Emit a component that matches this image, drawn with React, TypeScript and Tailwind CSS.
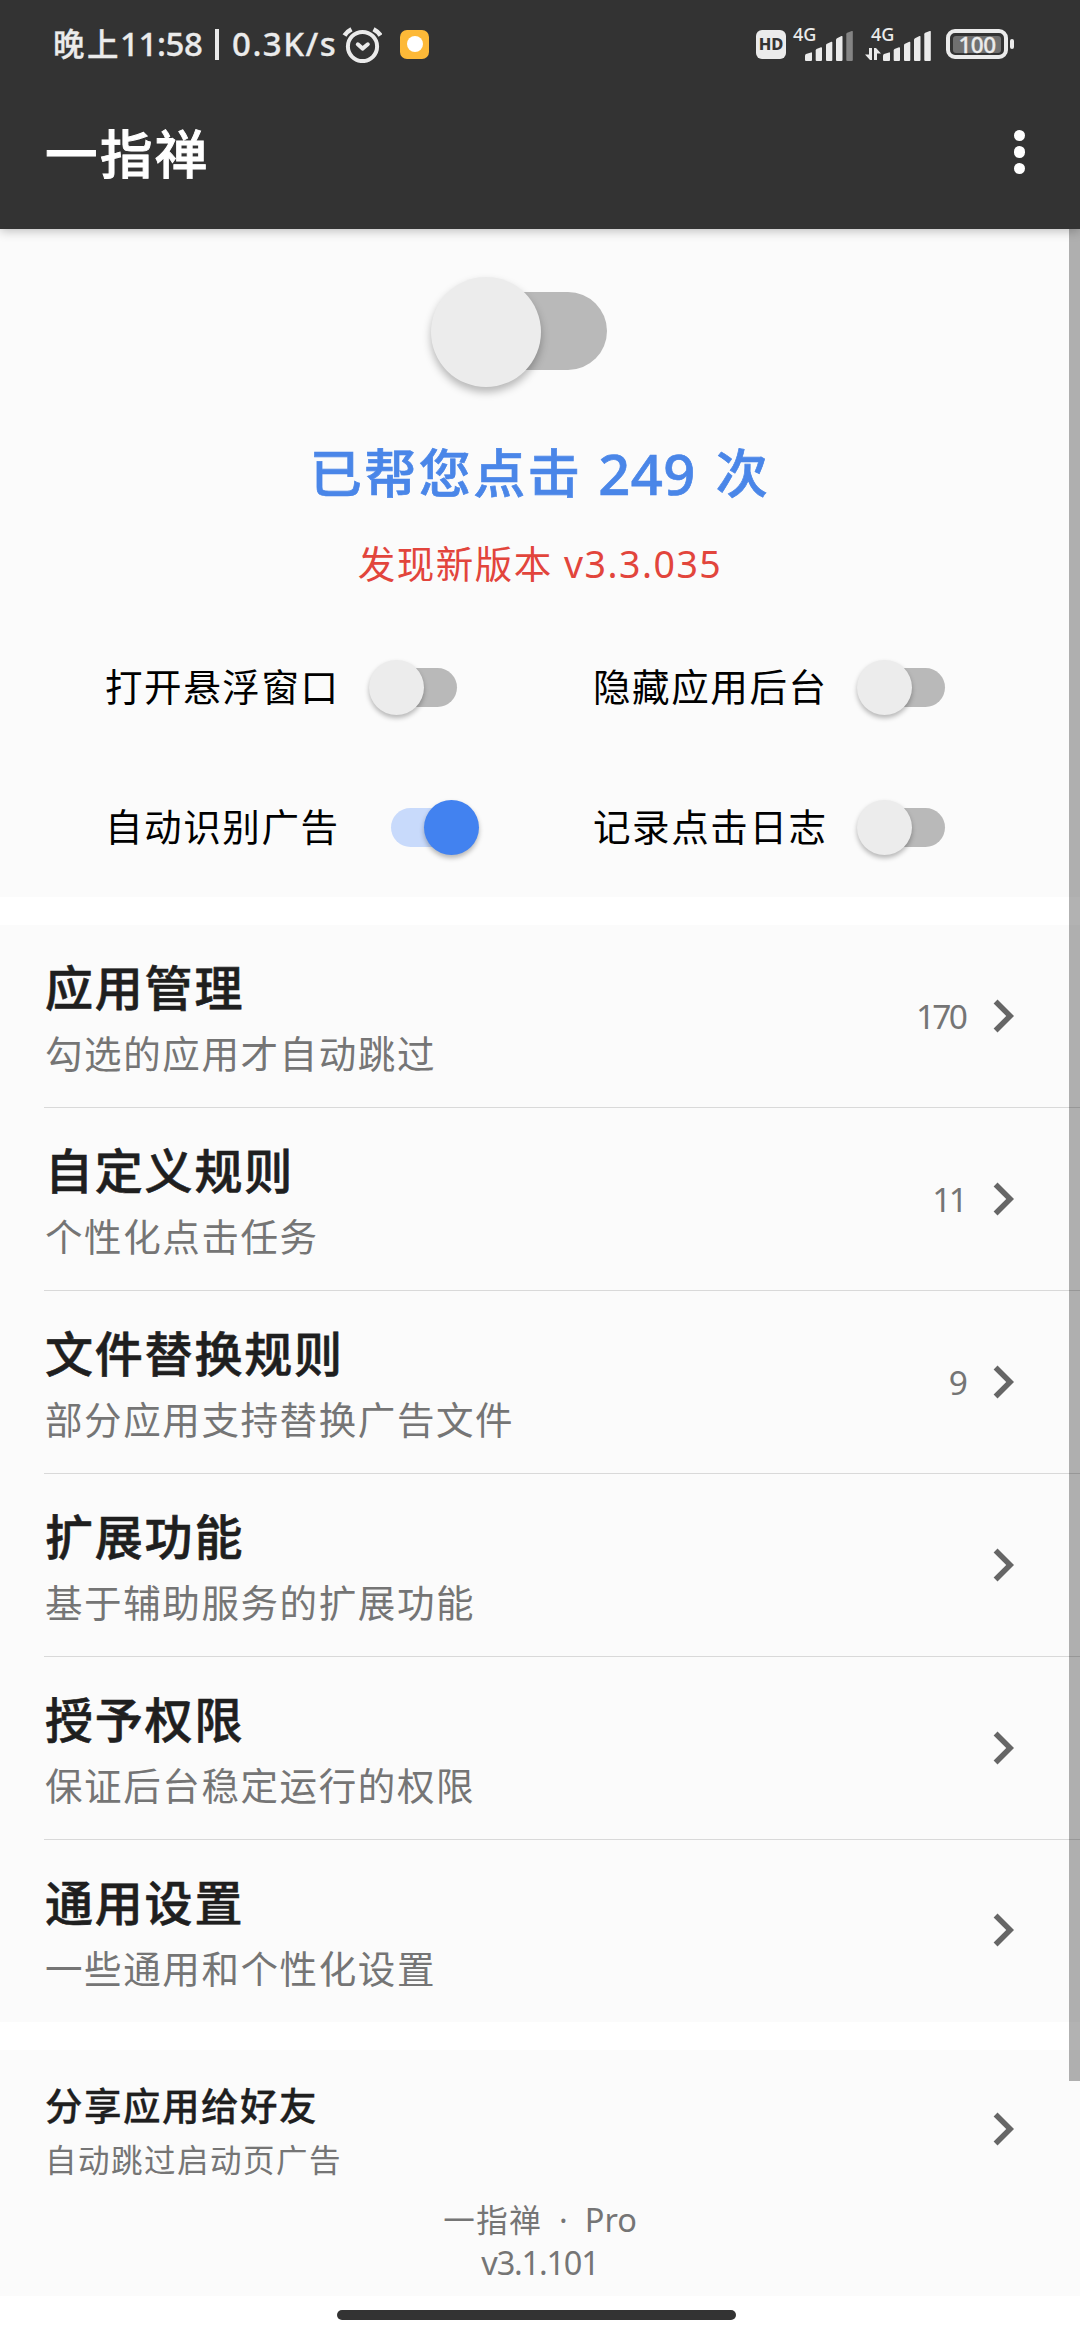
import type { ReactNode } from "react";

const FONT = "font-['Noto_Sans','Noto_Sans_CJK_SC',sans-serif]";

function Switch({ on = false }: { on?: boolean }) {
  return (
    <div className="relative h-[55px] w-[110px] shrink-0">
      <div
        className={`absolute top-[8px] left-[22px] h-[39px] w-[66px] rounded-full ${on ? "bg-[#c8dafb]" : "bg-[#b9b9b9]"}`}
      />
      <div
        className={`absolute top-0 h-[55px] w-[55px] rounded-full shadow-[0_3px_5px_rgba(0,0,0,0.28)] ${on ? "left-[55px] bg-[#4282f0]" : "left-0 bg-[#ececec]"}`}
      />
    </div>
  );
}

function Chevron() {
  return (
    <svg viewBox="0 0 24 24" className="h-[66px] w-[66px] shrink-0" fill="#666666">
      <path d="M10 6L8.59 7.41 13.17 12l-4.58 4.59L10 18l6-6z" />
    </svg>
  );
}

function Option({ label, on }: { label: string; on?: boolean }) {
  return (
    <div className="flex h-[140px] items-center">
      <span className="w-[264px] text-[37.5px] leading-[56px] tracking-[1.6px] whitespace-nowrap text-black">
        {label}
      </span>
      <Switch on={on} />
    </div>
  );
}

function Row({ title, note, count, last }: { title: string; note: string; count?: string; last?: boolean }) {
  return (
    <div className={`relative flex items-center pr-[44px] pb-[2px] pl-[45px] ${last ? "h-[182px]" : "h-[183px]"}`}>
      <div className="flex-1 self-start pt-[30px]">
        <div className="text-[48px] leading-[66px] font-medium tracking-[1.8px] text-[#1f1f1f] [-webkit-text-stroke:0.6px_#1f1f1f]">
          {title}
        </div>
        <div className="text-[37.5px] leading-[66px] tracking-[1.6px] text-[#757575]">{note}</div>
      </div>
      {count && (
        <span className="mr-[5px] text-[33.5px] leading-[50px] tracking-[-2.8px] text-[#757575]">{count}</span>
      )}
      <Chevron />
      {!last && <div className="absolute right-0 bottom-0 left-[44px] h-px bg-[#d9d9d9]" />}
    </div>
  );
}

function Bars({ weak }: { weak?: boolean }) {
  return (
    <svg viewBox="0 0 48 30" className="h-[30px] w-[48px]" fill="#ebebeb">
      <path d="M0 24.5Q0 23.6 1 23L6 21.4Q7 21.2 7 22V29Q7 30 6 30H1Q0 30 0 29Z" />
      <path d="M10.7 19.5Q10.7 18.6 11.5 18L16 16.2Q17 16 17 17V29Q17 30 16 30H11.7Q10.7 30 10.7 29Z" />
      <path d="M21 14.2Q21 13.3 22 12.8L26.3 10.8Q27.3 10.5 27.3 11.5V29Q27.3 30 26.3 30H22Q21 30 21 29Z" />
      <path d="M31 8.7Q31 7.8 32 7.2L36.5 5.1Q37.5 4.8 37.5 5.8V29Q37.5 30 36.5 30H32Q31 30 31 29Z" />
      <path
        fill={weak ? "#848484" : "#ebebeb"}
        d="M41.3 3.2Q41.3 2.2 42.2 1.8L46.8 0Q47.8 -.2 47.8 .8V29Q47.8 30 46.8 30H42.3Q41.3 30 41.3 29Z"
      />
    </svg>
  );
}

function Signal({ weak, className = "", children }: { weak?: boolean; className?: string; children?: ReactNode }) {
  return (
    <div className={`relative h-[34px] w-[60px] ${className}`}>
      <span className="absolute -top-[4px] left-0 text-[18px] leading-[22px] font-medium">4G</span>
      <div className="absolute top-[4px] left-[12px]">
        <Bars weak={weak} />
      </div>
      {children}
    </div>
  );
}

function StatusBar() {
  return (
    <div className="flex h-[88px] items-center pl-[53px] text-[33px] leading-[44px] font-medium whitespace-pre text-[#ebebeb]">
      <span className="w-[67px] text-[31.5px] tracking-[2.4px] [-webkit-text-stroke:0.3px_#ebebeb]">晚上</span>
      <span className="w-[95px] tracking-[-0.4px] [-webkit-text-stroke:0.3px_#ebebeb]">11:58</span>
      <span className="h-[31px] w-[4px] bg-[#ebebeb]" />
      <span className="ml-[13px] w-[110px] tracking-[1.5px] [-webkit-text-stroke:0.3px_#ebebeb]">0.3K/s</span>
      <svg viewBox="0 0 40 37" className="h-[37px] w-[40px]" fill="none" stroke="#ebebeb" strokeLinecap="round">
        <circle cx="20.5" cy="20.5" r="14.6" strokeWidth="4" />
        <path d="M2.5 9.5Q5 5.500 9.500 3.200M38.500 9.500Q36 5.500 31.500 3.200" strokeWidth="4.6" strokeLinecap="butt" />
        <path d="M15.800 18.300L20.500 22.600L25.800 18.300" strokeWidth="4" strokeLinejoin="round" />
      </svg>
      <div className="ml-[18px] flex h-[29px] w-[29px] items-center justify-center rounded-[7px] bg-[#fdb938]">
        <div className="h-[16px] w-[16px] rounded-full bg-white" />
      </div>
      <div className="ml-auto flex h-[29px] w-[30px] items-center justify-center rounded-[6px] bg-[#ebebeb] text-[16.500px] leading-[20px] font-extrabold text-[#333333]">
        HD
      </div>
      <Signal weak className="ml-[7px]" />
      <Signal className="ml-[18px]">
        <svg viewBox="0 0 16 12" className="absolute top-[21px] left-[-6px] h-[12px] w-[16px]" fill="#ebebeb">
          <path d="M4 0H7V12H5L0 6.500H4ZM9 0H11L16 5.500H12V12H9Z" />
        </svg>
      </Signal>
      <div className="relative ml-[15px] flex h-[30px] w-[62px] items-center justify-center rounded-[9px] border-[4px] border-[#ebebeb]">
        <div className="flex h-[17px] w-[48px] items-center justify-center rounded-[3px] bg-[#707070] text-[22.500px] leading-[17px] tracking-[-0.500px] [-webkit-text-stroke:0.3px_#ebebeb]">
          100
        </div>
        <div className="absolute top-[6px] -right-[10px] h-[10px] w-[4px] rounded-full bg-[#ebebeb]" />
      </div>
      <div className="w-[72px]" />
    </div>
  );
}

export default function App() {
  return (
    <div className={`relative flex h-[2340px] w-[1080px] flex-col overflow-hidden bg-white ${FONT}`} lang="zh-CN">
      <header className="relative z-10 h-[229px] shrink-0 bg-[#333333] shadow-[0_2px_10px_rgba(0,0,0,0.25)]">
        <StatusBar />
        <div className="flex h-[132px] items-center justify-between pr-[55px] pl-[45px]">
          <h1 className="text-[52.500px] leading-[70px] font-medium tracking-[2.400px] text-white [-webkit-text-stroke:0.9px_#ffffff]">
            一指禅
          </h1>
          <div className="flex flex-col gap-[5px] pb-[4px]">
            <span className="h-[11.500px] w-[11.500px] rounded-full bg-white" />
            <span className="h-[11.500px] w-[11.500px] rounded-full bg-white" />
            <span className="h-[11.500px] w-[11.500px] rounded-full bg-white" />
          </div>
        </div>
      </header>

      <section className="flex h-[668px] shrink-0 flex-col items-center bg-[#fbfbfb]">
        <div className="relative mt-[48px] ml-[1px] h-[110px] w-[220px]">
          <div className="absolute top-[15px] left-[44px] h-[78px] w-[132px] rounded-full bg-[#b9b9b9]" />
          <div className="absolute top-0 left-0 h-[110px] w-[110px] rounded-full bg-[#ececec] shadow-[0_5px_8px_rgba(0,0,0,0.28)]" />
        </div>
        <div className="mt-[51px] flex h-[72px] items-center text-[52px] leading-[72px] font-medium tracking-[2.500px] whitespace-pre text-[#4a86e8] [-webkit-text-stroke:0.7px_#4a86e8]">
          <span>已帮您点击 </span>
          <span className="text-[56px] tracking-[0.500px]">249</span>
          <span className="ml-[4px]"> 次</span>
        </div>
        <div className="mt-[27px] flex h-[56px] items-center text-[37.500px] leading-[56px] tracking-[1.500px] whitespace-pre text-[#e2453c]">
          <span>发现新版本 </span>
          <span>v3.3.035</span>
        </div>
        <div className="mt-[25px] grid w-full grid-cols-[488px_1fr] pl-[105px]">
          <Option label="打开悬浮窗口" />
          <Option label="隐藏应用后台" />
          <Option label="自动识别广告" on />
          <Option label="记录点击日志" />
        </div>
      </section>

      <section className="mt-[28px] shrink-0 bg-[#fbfbfb]">
        <Row title="应用管理" note="勾选的应用才自动跳过" count="170" />
        <Row title="自定义规则" note="个性化点击任务" count="11" />
        <Row title="文件替换规则" note="部分应用支持替换广告文件" count="9" />
        <Row title="扩展功能" note="基于辅助服务的扩展功能" />
        <Row title="授予权限" note="保证后台稳定运行的权限" />
        <Row title="通用设置" note="一些通用和个性化设置" last />
      </section>

      <section className="mt-[28px] h-[246px] shrink-0 bg-[#fbfbfb]">
        <div className="flex h-[149px] items-center pt-[8px] pr-[44px] pl-[45px]">
          <div className="flex-1 pt-[8px]">
            <div className="text-[37.500px] leading-[54px] font-medium tracking-[1.500px] text-[#1f1f1f] [-webkit-text-stroke:0.3px_#1f1f1f]">
              分享应用给好友
            </div>
            <div className="text-[31.500px] leading-[54px] tracking-[1.500px] text-[#757575]">自动跳过启动页广告</div>
          </div>
          <Chevron />
        </div>
        <div className="text-center text-[31.500px] leading-[42.500px] whitespace-pre text-[#757575]">
          <div>
            <span className="tracking-[1.500px]">一指禅</span>
            <span className="text-[32.500px]">{"  ·  Pro"}</span>
          </div>
          <div className="text-[32.500px] tracking-[-1.200px]">v3.1.101</div>
        </div>
      </section>

      <footer className="flex h-[44px] shrink-0 justify-center bg-white pt-[14px]">
        <div className="mr-[7px] h-[10px] w-[399px] rounded-full bg-[#333333]" />
      </footer>

      <div className="absolute top-[229px] right-0 z-20 h-[1852px] w-[11px] bg-black/30" />
    </div>
  );
}
